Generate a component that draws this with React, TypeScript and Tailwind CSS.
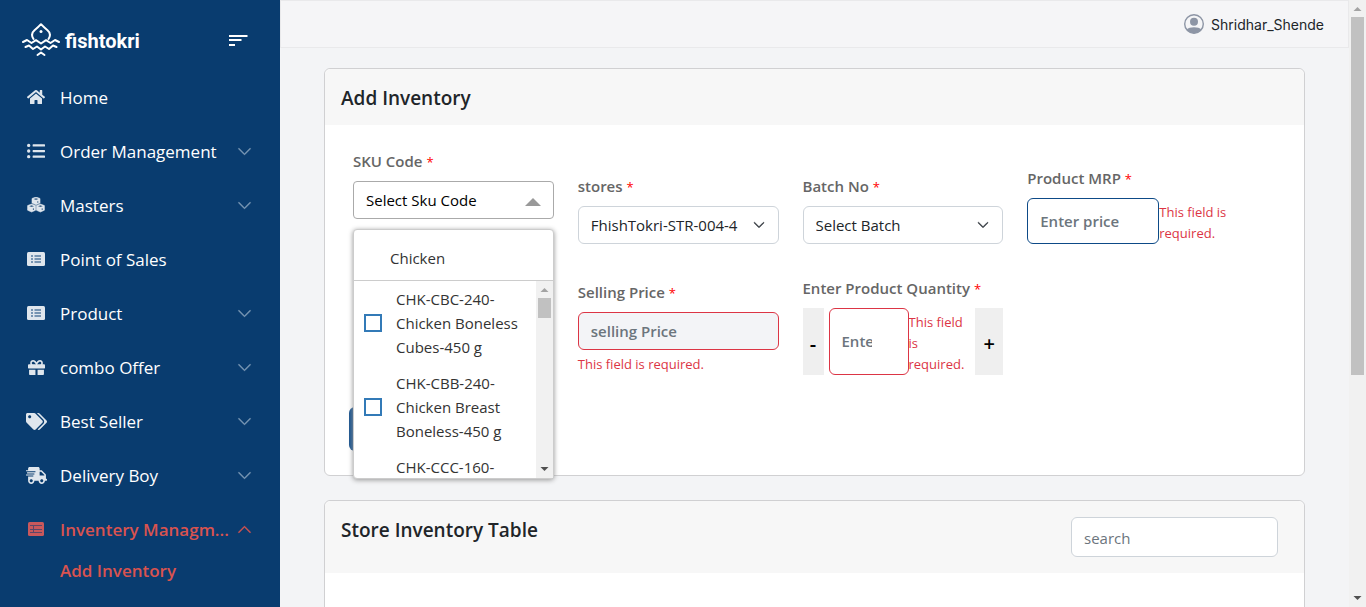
import type { ReactNode } from "react";
import { FaGift, FaHome, FaListUl, FaShippingFast, FaTags } from "react-icons/fa";
import { BsChevronDown, BsChevronUp } from "react-icons/bs";

function CubesIcon() {
  return (
    <svg width="18" height="16" viewBox="0 0 18 16">
      <g fill="currentColor">
        <path d="M9 0L13 1.500V6L9 7.800L5 6V1.500Z" strokeLinejoin="round" stroke="currentColor" strokeWidth="0.600" />
        <path d="M4.600 7L8.600 8.600V13.200L4.600 15L0.600 13.200V8.600Z" strokeLinejoin="round" stroke="currentColor" strokeWidth="0.600" />
        <path d="M13.400 7L17.400 8.600V13.200L13.400 15L9.400 13.200V8.600Z" strokeLinejoin="round" stroke="currentColor" strokeWidth="0.600" />
      </g>
      <path d="M9 1.200L11.500 2.100L9 3L6.500 2.100ZM4.600 8.300L7 9.200L4.600 10.100L2.200 9.200ZM13.400 8.300L15.800 9.200L13.400 10.100L11 9.200Z" fill="#42678d" />
      <path d="M10.800 4.200V5.800M6.400 11.300V13M15.200 11.300V13" stroke="#42678d" strokeWidth="1" />
    </svg>
  );
}

function ListCardIcon() {
  return (
    <svg width="18" height="14" viewBox="0 0 18 14">
      <rect width="18" height="14" rx="1.500" fill="currentColor" />
      <path d="M4 4H6M4 7H6M4 10H6M7.500 4H14M7.500 7H14M7.500 10H14" stroke="#54799f" strokeWidth="1.600" />
    </svg>
  );
}

function TableIcon() {
  return (
    <svg width="16" height="14" viewBox="0 0 16 14">
      <rect width="16" height="14" rx="1.500" fill="#c8585c" />
      <path d="M2 3.500H14M2 7.500H14M2 10.500H14M5.500 3V11" stroke="#5c4668" strokeWidth="1" />
    </svg>
  );
}

const navItems: { label: string; icon: ReactNode; expandable: boolean }[] = [
  { label: "Home", icon: <FaHome size={18} />, expandable: false },
  { label: "Order Management", icon: <FaListUl size={18} />, expandable: true },
  { label: "Masters", icon: <CubesIcon />, expandable: true },
  { label: "Point of Sales", icon: <ListCardIcon />, expandable: false },
  { label: "Product", icon: <ListCardIcon />, expandable: true },
  { label: "combo Offer", icon: <FaGift size={17} />, expandable: true },
  { label: "Best Seller", icon: <FaTags size={21} />, expandable: true },
  { label: "Delivery Boy", icon: <FaShippingFast size={21} />, expandable: true },
];

const skuOptions = [
  "CHK-CBC-240-Chicken Boneless Cubes-450 g",
  "CHK-CBB-240-Chicken Breast Boneless-450 g",
  "CHK-CCC-160-",
];

function Logo() {
  return (
    <a href="#" className="flex items-center gap-1 text-white">
      <svg width="40" height="34" viewBox="0 0 40 34" fill="none" stroke="currentColor" strokeWidth="2" strokeLinejoin="round" strokeLinecap="round">
        <path d="M12.500 16C10.500 13 10.800 9.500 13.500 7.200C16 5.200 18 3.500 20 1.200C22 3.500 24 5.200 26.500 7.200C29.200 9.500 29.500 13 27.500 16" />
        <circle cx="20" cy="8.500" r="1.500" fill="currentColor" stroke="none" />
        <path d="M2 19L6 17L10.500 20L15 17.200L20 20.500L25 17.200L29.500 20L34 17L38 19" />
        <path d="M4.500 24L8 22.500L12 26L16 23.500L20 26.500L24 23.500L28 26L32 22.500L35.500 24" />
        <path d="M16.500 32L20 29.500L23.500 32" />
      </svg>
      <span className="pt-[3px] font-[Roboto,sans-serif] text-[20px] leading-6 font-bold">fishtokri</span>
    </a>
  );
}

function Sidebar() {
  return (
    <aside className="w-[280px] shrink-0 overflow-hidden bg-[#093c6f] text-white">
      <div className="flex h-[71px] items-center justify-between pt-2 pr-8 pl-[21px]">
        <Logo />
        <button type="button" aria-label="Menu" className="text-white">
          <svg width="20" height="14" viewBox="0 0 20 14" stroke="currentColor" strokeWidth="2">
            <path d="M1 3H19.500M1 7H13.500M1 12H7" />
          </svg>
        </button>
      </div>
      <nav className="text-[17px]">
        <ul>
          {navItems.map((item) => (
            <li key={item.label}>
              <a href="#" className="flex h-[54px] items-center pr-7">
                <span className="flex w-[60px] shrink-0 justify-center pr-3 pb-[2px] pl-6 text-[#dfe6ed]">
                  <span className="flex w-6 shrink-0 justify-center">{item.icon}</span>
                </span>
                <span className="flex-1 truncate">{item.label}</span>
                {item.expandable && <BsChevronDown size={15} strokeWidth={0.5} className="mb-[2px] text-[#7d9ab6]" />}
              </a>
            </li>
          ))}
          <li className="font-semibold text-[#d9534f]">
            <a href="#" className="flex h-[54px] items-center pr-7">
              <span className="flex w-[60px] shrink-0 justify-center pr-3 pb-[2px] pl-6">
                <TableIcon />
              </span>
              <span className="flex-1 whitespace-nowrap">Inventery Managm...</span>
              <BsChevronUp size={15} strokeWidth={0.5} className="mb-[2px]" />
            </a>
            <a href="#" className="flex h-7 items-center pl-[60px]">
              Add Inventory
            </a>
          </li>
        </ul>
      </nav>
    </aside>
  );
}

function Scrollbar({ thumb }: { thumb: string }) {
  return (
    <div aria-hidden="true" className="flex w-[17px] shrink-0 flex-col items-center bg-[#f1f1f1]">
      <svg width="17" height="17" viewBox="0 0 17 17" className="shrink-0 fill-[#a3a3a3]">
        <path d="M4.500 11L8.500 7L12.500 11Z" />
      </svg>
      <div className="flex min-h-0 w-[13px] flex-1 flex-col">
        <div className={`bg-[#c1c1c1] ${thumb}`} />
      </div>
      <svg width="17" height="17" viewBox="0 0 17 17" className="shrink-0 fill-[#505050]">
        <path d="M4.500 6L8.500 10L12.500 6Z" />
      </svg>
    </div>
  );
}

function Label({ htmlFor, children }: { htmlFor: string; children: ReactNode }) {
  return (
    <label htmlFor={htmlFor} className="mb-2 block leading-6 font-semibold whitespace-nowrap text-[#666]">
      {children} <span className="text-[13px] leading-none font-normal text-[#f00]">*</span>
    </label>
  );
}

function RequiredError() {
  return <p className="mt-1 text-[13px] leading-[21px] text-[#dc3545]">This field is required.</p>;
}

function Select({ id, label, option }: { id: string; label: string; option: string }) {
  return (
    <div className="min-w-0">
      <Label htmlFor={id}>{label}</Label>
      <div className="grid items-center">
        <select id={id} className="col-start-1 row-start-1 h-[38px] w-full appearance-none rounded-md border border-[#ced4da] bg-white pr-9 pl-3 text-[#212529]">
          <option>{option}</option>
        </select>
        <BsChevronDown size={12} strokeWidth={1} className="pointer-events-none col-start-1 row-start-1 mr-[14px] justify-self-end text-[#343a40]" />
      </div>
    </div>
  );
}

function SkuField() {
  return (
    <div className="relative mb-[25px]">
      <Label htmlFor="sku">SKU Code</Label>
      <button id="sku" type="button" className="flex h-[38px] w-full items-center justify-between rounded-sm border border-[#aaa] pr-3 pl-3 text-black">
        Select Sku Code
        <svg width="16" height="8" viewBox="0 0 16 8" className="mt-1 fill-[#999]">
          <path d="M0 8L8 0L16 8Z" />
        </svg>
      </button>
      <div className="absolute top-20 right-0 left-0 z-10 flex h-[250px] flex-col rounded-sm border border-[#ccc] bg-white text-[#333] shadow-[0_1px_5px_#959595]">
        <input type="text" aria-label="Chicken" defaultValue="Chicken" className="h-[51px] w-full shrink-0 border-b border-[#ccc] pt-[6px] pl-9 outline-none" />
        <div className="flex min-h-0 flex-1">
          <ul className="min-w-0 flex-1 overflow-hidden">
            {skuOptions.map((option) => (
              <li key={option}>
                <label className="flex min-h-[84px] items-center gap-[14px] py-[6px] pr-2 pl-[10px] leading-6">
                  <input type="checkbox" className="size-[18px] shrink-0 appearance-none border-2 border-[#337ab7] bg-white" />
                  <span className="self-start">{option}</span>
                </label>
              </li>
            ))}
          </ul>
          <Scrollbar thumb="h-5" />
        </div>
      </div>
    </div>
  );
}

function InventoryForm() {
  return (
    <section className="rounded-md border border-[#d0d0d2] bg-white">
      <header className="rounded-t-md bg-[#f7f7f7] px-4 pt-4 pb-[14px]">
        <h2 className="text-[19px] leading-[26px] font-semibold text-[#212529]">Add Inventory</h2>
      </header>
      <form className="pt-6 pr-[76px] pb-6 pl-7">
        <div className="grid grid-cols-4 items-end gap-x-6 gap-y-8">
          <SkuField />
          <Select id="stores" label="stores" option="FhishTokri-STR-004-4" />
          <Select id="batch" label="Batch No" option="Select Batch" />
          <div>
            <Label htmlFor="mrp">Product MRP</Label>
            <div className="flex">
              <input id="mrp" type="text" placeholder="Enter price" className="w-[132px] shrink-0 rounded-md border border-[#0d4a87] px-3 font-semibold placeholder:text-[#6c757d]" />
              <RequiredError />
            </div>
          </div>
          <div className="col-start-2">
            <Label htmlFor="selling">Selling Price</Label>
            <input id="selling" type="text" placeholder="selling Price" className="h-[38px] w-full rounded-md border border-[#dc3545] bg-[#f3f4f7] px-3 font-semibold placeholder:text-[#6c757d]" />
            <RequiredError />
          </div>
          <div>
            <Label htmlFor="quantity">Enter Product Quantity</Label>
            <div className="flex">
              <button type="button" className="mr-[5px] w-[21px] shrink-0 bg-[#efefef] pt-1 text-[20px] font-semibold text-black">-</button>
              <input id="quantity" type="text" placeholder="Enter" className="w-20 shrink-0 rounded-md border border-[#dc3545] pr-9 pl-3 font-semibold placeholder:text-[#6c757d]" />
              <RequiredError />
              <button type="button" className="ml-auto w-7 shrink-0 bg-[#efefef] pt-1 text-[20px] font-semibold text-black">+</button>
            </div>
          </div>
        </div>
        <button type="submit" aria-label="Submit" className="mt-8 -ml-1 block h-11 w-24 rounded-md bg-[#1c5590]" />
      </form>
    </section>
  );
}

function InventoryTable() {
  return (
    <section className="h-80 rounded-md border border-[#d0d0d2] bg-white">
      <header className="flex items-start justify-between rounded-t-md bg-[#f7f7f7] py-4 pr-[26px] pl-4">
        <h2 className="text-[19px] leading-[26px] font-semibold text-[#212529]">Store Inventory Table</h2>
        <input type="search" aria-label="search" placeholder="search" className="h-10 w-[207px] rounded-md border border-[#ced4da] bg-white px-3 pt-[2px] placeholder:text-[#6c757d]" />
      </header>
    </section>
  );
}

export default function App() {
  return (
    <div className="flex h-screen overflow-hidden bg-[#f3f4f6] font-['Open_Sans','Noto_Sans',sans-serif] text-[15px]">
      <Sidebar />
      <div className="flex min-w-0 flex-1 flex-col overflow-hidden">
        <header className="flex h-12 shrink-0 items-center justify-end gap-[7px] border border-[#e9e9eb] bg-[#f5f5f7] pr-6">
          <svg width="20" height="20" viewBox="0 0 20 20" fill="none" className="text-[#8d95a5]">
            <circle cx="10" cy="10" r="9.300" stroke="currentColor" strokeWidth="1.400" />
            <circle cx="10" cy="7.800" r="4" fill="currentColor" />
            <path d="M2.800 15.500C5 12.600 15 12.600 17.200 15.500C15.500 18 13 19.300 10 19.300S4.500 18 2.800 15.500Z" fill="currentColor" />
          </svg>
          <span className="pt-[2px] font-[Inter,sans-serif] text-[14px] leading-5 text-[#212529]">Shridhar_Shende</span>
        </header>
        <main className="flex flex-col gap-6 px-11 pt-5">
          <InventoryForm />
          <InventoryTable />
        </main>
      </div>
      <Scrollbar thumb="h-[358px]" />
    </div>
  );
}
